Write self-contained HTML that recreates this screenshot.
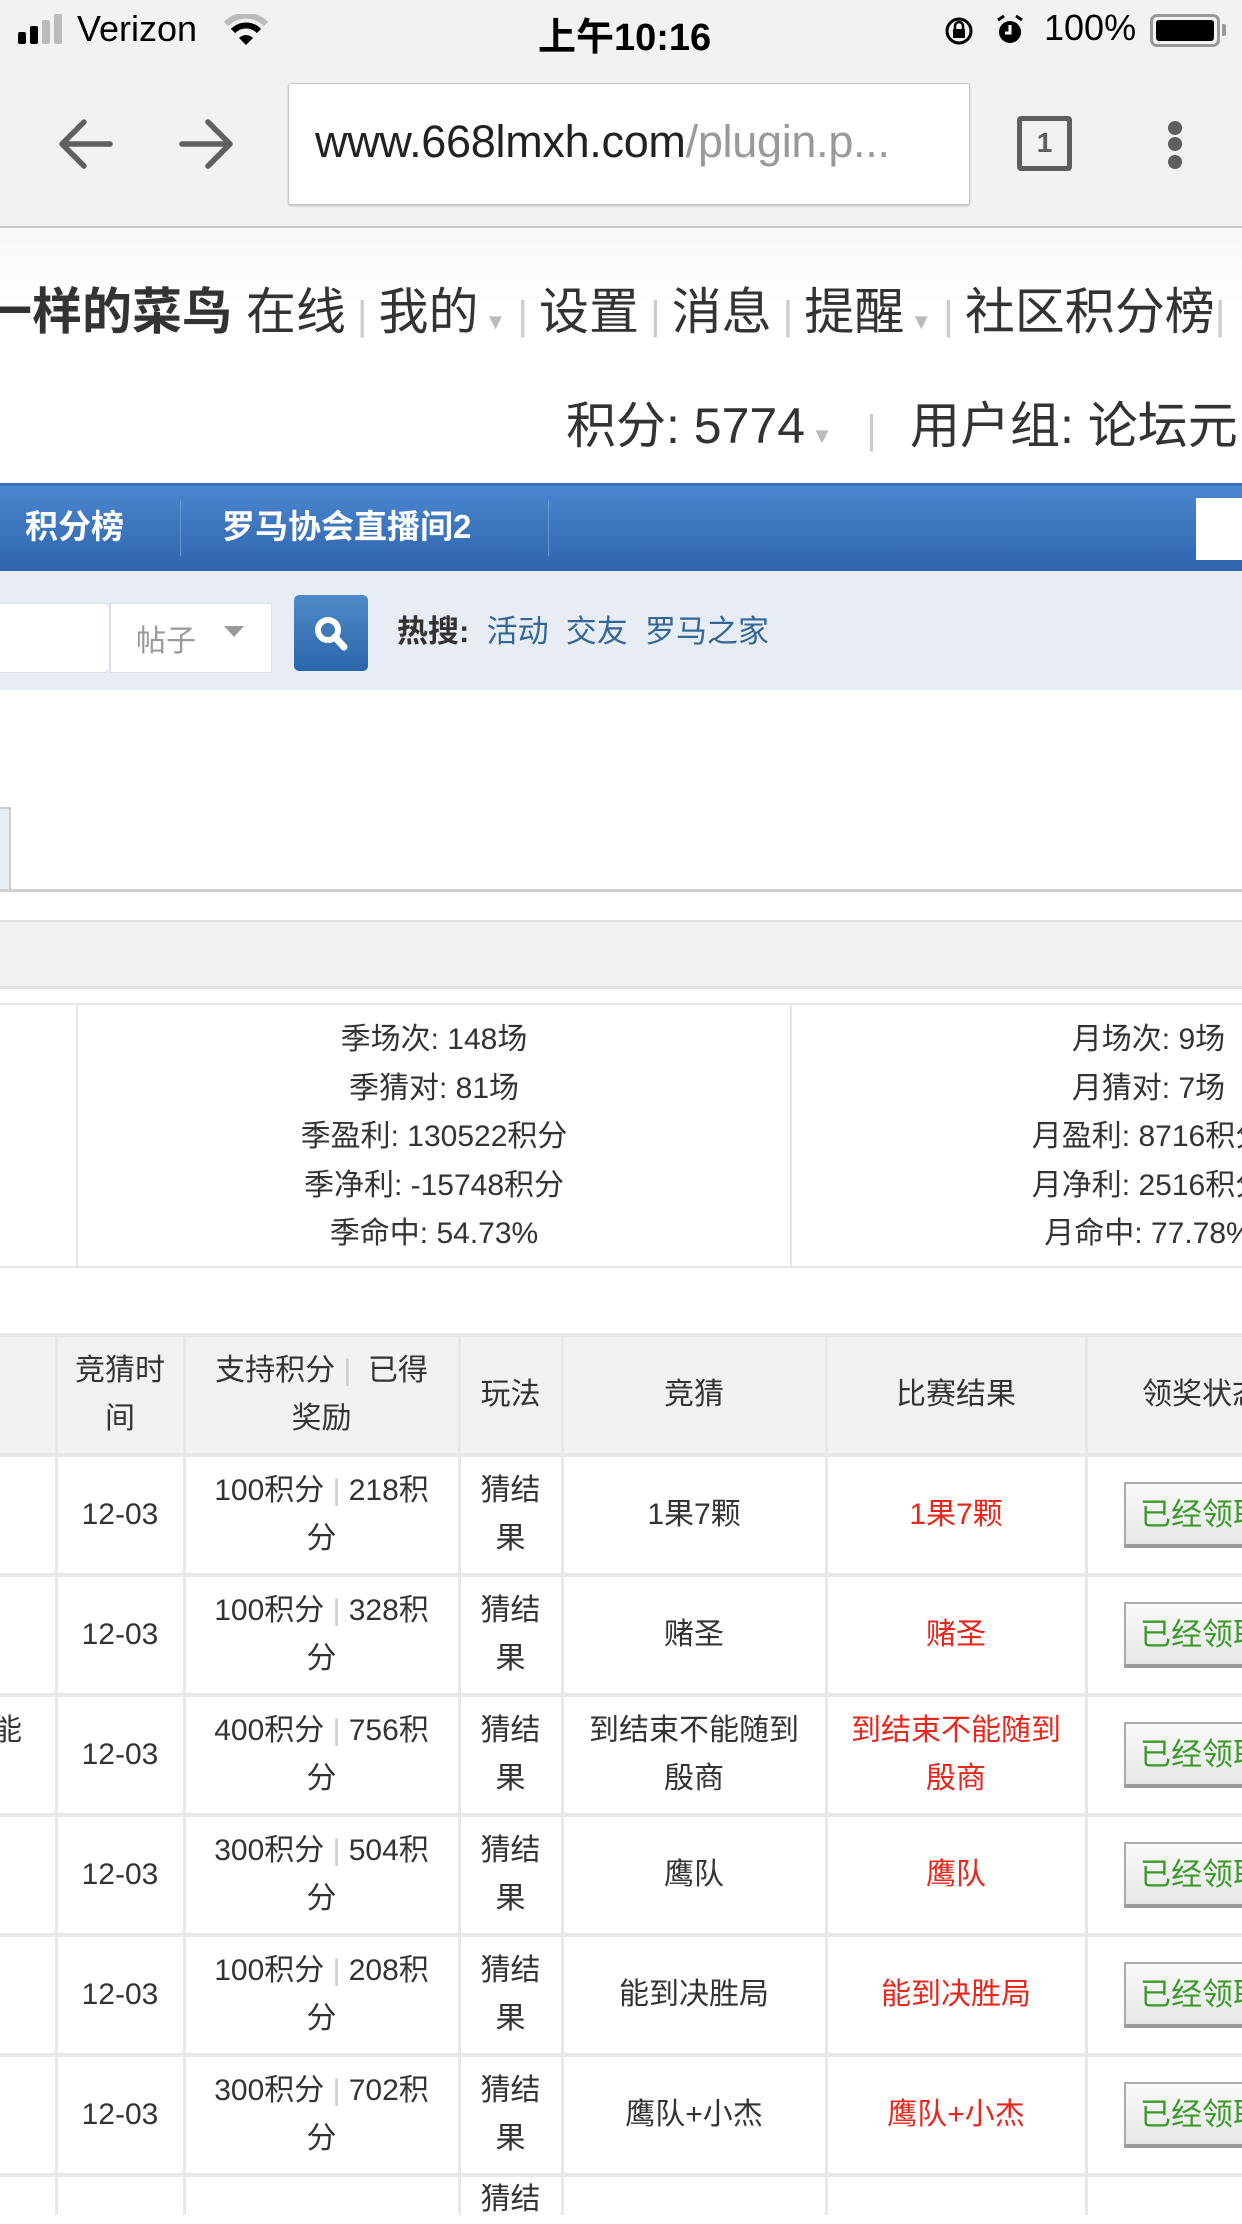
<!DOCTYPE html>
<html><head><meta charset="utf-8"><style>
*{margin:0;padding:0;box-sizing:border-box}
body{width:1242px;height:2208px;overflow:hidden;background:#fff;font-family:"Liberation Sans","Noto Sans CJK SC",sans-serif;position:relative}
.a{position:absolute;white-space:nowrap}
.c{text-align:center}
.t{font-size:30px;color:#333;line-height:48px}
.btn{position:absolute;left:1124px;width:140px;height:66px;border:2px solid #aaa;border-bottom:4px solid #999;background:linear-gradient(#fafafa,#e6e6e6);color:#3a9a2a;font-size:31px;line-height:62px;padding-left:14px;white-space:nowrap}
</style></head><body>
<div class="a" style="left:0;top:0;width:1242px;height:228px;background:#f2f2f2;border-bottom:2px solid #c8c8c8"></div>
<div class="a" style="left:18px;top:32px;width:8px;height:12px;background:#000;border-radius:2px"></div>
<div class="a" style="left:30px;top:26px;width:8px;height:18px;background:#000;border-radius:2px"></div>
<div class="a" style="left:42px;top:20px;width:8px;height:24px;background:#bbb;border-radius:2px"></div>
<div class="a" style="left:54px;top:14px;width:8px;height:30px;background:#bbb;border-radius:2px"></div>
<div class="a" style="left:77px;top:8px;font-size:36px;color:#000;font-weight:500">Verizon</div>
<svg class="a" style="left:224px;top:14px" width="44" height="32" viewBox="0 0 44 32"><path d="M2 10 A28 28 0 0 1 42 10" stroke="#bbb" stroke-width="6" fill="none"/><path d="M9 17 A18 18 0 0 1 35 17" stroke="#000" stroke-width="6" fill="none"/><path d="M15 24 L22 31 L29 24 A10 10 0 0 0 15 24Z" fill="#000"/></svg>
<div class="a" style="left:538px;top:6px;font-size:38px;font-weight:bold;color:#000">上午10:16</div>
<svg class="a" style="left:943px;top:14px" width="34" height="34" viewBox="0 0 34 34"><circle cx="16" cy="17" r="12" stroke="#000" stroke-width="3" fill="none"/><rect x="10" y="15" width="12" height="9" fill="#000"/><path d="M12 15 v-3 a4 4 0 0 1 8 0 v3" stroke="#000" stroke-width="2.5" fill="none"/></svg>
<svg class="a" style="left:995px;top:14px" width="30" height="32" viewBox="0 0 30 32"><circle cx="15" cy="18" r="11" fill="#000"/><path d="M15 11 v8 h-5" stroke="#fff" stroke-width="3" fill="none"/><path d="M3 6 l6 -4 M27 6 l-6 -4" stroke="#000" stroke-width="3"/></svg>
<div class="a" style="left:1044px;top:7px;font-size:36px;color:#000">100%</div>
<div class="a" style="left:1150px;top:14px;width:70px;height:33px;border:3px solid #999;border-radius:7px;padding:3px"><div style="width:100%;height:100%;background:#000;border-radius:3px"></div></div>
<div class="a" style="left:1222px;top:24px;width:4px;height:12px;background:#999;border-radius:0 2px 2px 0"></div>

<svg class="a" style="left:56px;top:116px" width="60" height="56" viewBox="0 0 60 56"><path d="M54 28 H6 M28 6 L6 28 L28 50" stroke="#606060" stroke-width="5.5" stroke-linecap="round" stroke-linejoin="round" fill="none"/></svg>
<svg class="a" style="left:176px;top:116px" width="60" height="56" viewBox="0 0 60 56"><path d="M6 28 H54 M32 6 L54 28 L32 50" stroke="#606060" stroke-width="5.5" stroke-linecap="round" stroke-linejoin="round" fill="none"/></svg>
<div class="a" style="left:288px;top:83px;width:682px;height:122px;background:#fff;border:1px solid #c8c8c8;border-radius:3px;box-shadow:0 1px 2px #bbb"></div>
<div class="a" style="left:315px;top:116px;font-size:45px;color:#222;letter-spacing:-0.3px">www.668lmxh.com<span style="color:#999">/plugin.p...</span></div>
<div class="a" style="left:1017px;top:116px;width:55px;height:55px;border:5px solid #5e5e5e;border-radius:4px;font-size:28px;font-weight:bold;color:#5e5e5e;text-align:center;line-height:44px">1</div>
<div class="a" style="left:1168px;top:121px;width:14px;height:14px;border-radius:7px;background:#5e5e5e"></div>
<div class="a" style="left:1168px;top:137px;width:14px;height:14px;border-radius:7px;background:#5e5e5e"></div>
<div class="a" style="left:1168px;top:155px;width:14px;height:14px;border-radius:7px;background:#5e5e5e"></div>

<div class="a" style="left:0;top:230px;width:1242px;height:250px;background:linear-gradient(#f7f8fa,#fff 30%)"></div>
<div class="a" style="left:-18px;top:282px;font-size:50px;color:#333;line-height:60px"><b>一样的菜鸟</b> 在线<span style="color:#ccc;font-size:40px"> | </span>我的<span style="color:#bbb;font-size:22px"> ▼</span><span style="color:#ccc;font-size:40px"> | </span>设置<span style="color:#ccc;font-size:40px"> | </span>消息<span style="color:#ccc;font-size:40px"> | </span>提醒<span style="color:#bbb;font-size:22px"> ▼</span><span style="color:#ccc;font-size:40px"> | </span>社区积分榜<span style="color:#ccc;font-size:40px">|</span></div>
<div class="a" style="left:566px;top:396px;font-size:50px;color:#333;line-height:60px">积分: 5774<span style="color:#bbb;font-size:22px"> ▼</span><span style="color:#ccc;font-size:40px">&nbsp;&nbsp; | &nbsp;&nbsp;</span>用户组: 论坛元</div>

<div class="a" style="left:0;top:483px;width:1242px;height:88px;background:linear-gradient(#4a87d0,#2f63ad);border-top:3px solid #3a70c0"></div>
<div class="a" style="left:25px;top:503px;font-size:33px;font-weight:bold;color:#fff;line-height:48px">积分榜</div>
<div class="a" style="left:180px;top:500px;width:1px;height:56px;background:#6a96d2"></div>
<div class="a" style="left:222px;top:503px;font-size:33px;font-weight:bold;color:#fff;line-height:48px">罗马协会直播间2</div>
<div class="a" style="left:548px;top:500px;width:1px;height:56px;background:#6a96d2"></div>
<div class="a" style="left:1196px;top:498px;width:50px;height:62px;background:#fff"></div>

<div class="a" style="left:0;top:571px;width:1242px;height:119px;background:#e8edf3"></div>
<div class="a" style="left:-10px;top:603px;width:120px;height:70px;background:#fff;border:1px solid #dde;border-radius:6px"></div>
<div class="a" style="left:110px;top:603px;width:162px;height:70px;background:#fff;border:1px solid #dde"></div>
<div class="a" style="left:136px;top:616px;font-size:30px;color:#999">帖子</div>
<div class="a" style="left:224px;top:626px;width:0;height:0;border-left:10px solid transparent;border-right:10px solid transparent;border-top:11px solid #999"></div>
<div class="a" style="left:294px;top:595px;width:74px;height:76px;background:linear-gradient(#4f8ac8,#2a66aa);border-radius:5px"></div>
<svg class="a" style="left:310px;top:612px" width="44" height="44" viewBox="0 0 44 44"><circle cx="18" cy="18" r="10" stroke="#fff" stroke-width="6" fill="none"/><path d="M25 25 L34 35" stroke="#fff" stroke-width="7" stroke-linecap="round"/></svg>
<div class="a" style="left:397px;top:610px;font-size:31px;line-height:44px;color:#333"><b>热搜:</b> <span style="color:#336699">&nbsp;活动 &nbsp;交友 &nbsp;罗马之家</span></div>

<div class="a" style="left:-2px;top:807px;width:13px;height:84px;background:#e8eef4;border:2px solid #ccc"></div>
<div class="a" style="left:0;top:889px;width:1242px;height:3px;background:#d0d0d0"></div>
<div class="a" style="left:0;top:920px;width:1242px;height:69px;background:#f0f0f0;border-top:2px solid #e2e2e2;border-bottom:3px solid #e2e2e2"></div>

<div class="a" style="left:0;top:1003px;width:1242px;height:265px;border-top:2px solid #e6e6e6;border-bottom:2px solid #e6e6e6"></div>
<div class="a" style="left:76px;top:1003px;width:2px;height:265px;background:#e6e6e6"></div>
<div class="a" style="left:790px;top:1003px;width:2px;height:265px;background:#e6e6e6"></div>
<div class="a t c" style="left:78px;top:1016px;width:712px;font-size:30px;line-height:48.5px">季场次: 148场<br>季猜对: 81场<br>季盈利: 130522积分<br>季净利: -15748积分<br>季命中: 54.73%</div>
<div class="a t c" style="left:792px;top:1016px;width:713px;font-size:30px;line-height:48.5px">月场次: 9场<br>月猜对: 7场<br>月盈利: 8716积分<br>月净利: 2516积分<br>月命中: 77.78%</div>

<div class="a" style="left:0;top:1335px;width:1242px;height:120px;background:#f2f2f2"></div>
<div class="a t c" style="left:56px;top:1347px;width:128px">竞猜时<br>间</div>
<div class="a t c" style="left:184px;top:1347px;width:275px">支持积分 <span style="color:#ccc">|</span> &nbsp;已得<br>奖励</div>
<div class="a t c" style="left:459px;top:1371px;width:103px">玩法</div>
<div class="a t c" style="left:562px;top:1371px;width:264px">竞猜</div>
<div class="a t c" style="left:826px;top:1371px;width:260px">比赛结果</div>
<div class="a t" style="left:1142px;top:1371px">领奖状态</div>

<div id="rows"></div>
<script>
var cols=[56,184,459,562,826,1086];
var g='';
var tops=[1335,1455,1575,1695,1815,1935,2055,2175];
tops.forEach(function(t){g+='<div class="a" style="left:0;top:'+(t-2)+'px;width:1242px;height:4px;background:#e8e8e8"></div>';});
cols.forEach(function(x){g+='<div class="a" style="left:'+(x-1)+'px;top:1335px;width:3px;height:880px;background:#e8e8e8"></div>';});
var d=[["100","218","1果7颗",""],["100","328","赌圣",""],["400","756","到结束不能随到<br>殷商","能"],["300","504","鹰队",""],["100","208","能到决胜局",""],["300","702","鹰队+小杰",""]];
d.forEach(function(r,i){
 var t=1455+i*120;
 var one=r[2].indexOf('<br>')<0;
 g+='<div class="a t c" style="left:56px;top:'+(t+36)+'px;width:128px">12-03</div>';
 g+='<div class="a t c" style="left:184px;top:'+(t+12)+'px;width:275px">'+r[0]+'积分 <span style="color:#ccc">|</span> '+r[1]+'积<br>分</div>';
 g+='<div class="a t c" style="left:459px;top:'+(t+12)+'px;width:103px">猜结<br>果</div>';
 g+='<div class="a t c" style="left:562px;top:'+(t+(one?36:12))+'px;width:264px">'+r[2]+'</div>';
 g+='<div class="a t c" style="left:826px;top:'+(t+(one?36:12))+'px;width:260px;color:#e8261b">'+r[2]+'</div>';
 g+='<div class="btn" style="top:'+(t+27)+'px">已经领取</div>';
 if(r[3]) g+='<div class="a t" style="left:-8px;top:'+(t+12)+'px">'+r[3]+'</div>';
});
g+='<div class="a t c" style="left:459px;top:2176px;width:103px">猜结</div>';
document.getElementById('rows').innerHTML=g;
</script>
</body></html>
